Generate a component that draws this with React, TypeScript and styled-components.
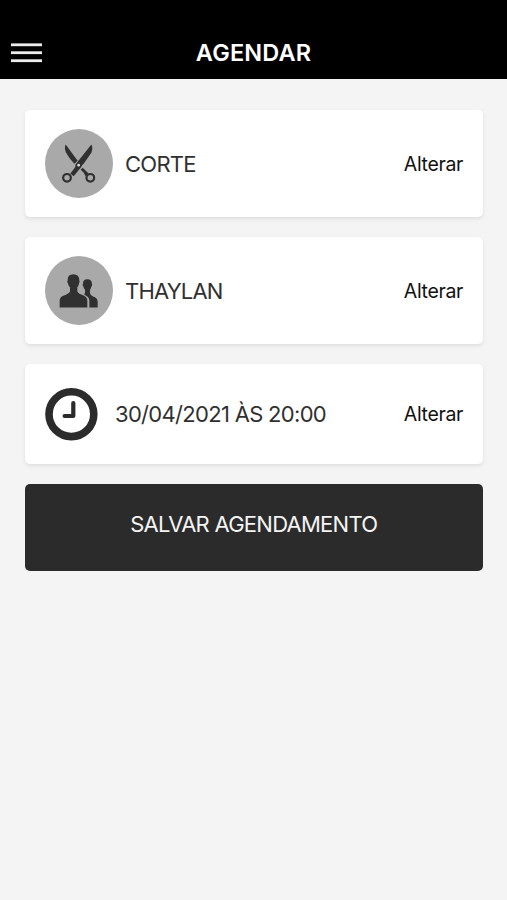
import React from 'react';
import styled, { createGlobalStyle } from 'styled-components';

const GlobalStyle = createGlobalStyle`
  * { box-sizing: border-box; }
  body {
    margin: 0;
    background: #f4f4f4;
    font-family: Inter, 'Liberation Sans', sans-serif;
  }
`;

const Screen = styled.div`
  min-height: 900px;
  background: #f4f4f4;
`;

const Header = styled.header`
  display: grid;
  grid-template-columns: 42px 1fr 42px;
  height: 79px;
  padding-top: 26px;
  align-items: center;
  background: #000;
`;

const MenuButton = styled.button`
  display: flex;
  width: 42px;
  padding: 0 0 0 10.5px;
  border: 0;
  background: none;
`;

const Title = styled.h1`
  margin: 0;
  color: #fff;
  font-size: 23.5px;
  font-weight: 600;
  line-height: 28px;
  letter-spacing: 0.15px;
  text-align: center;
`;

const Content = styled.main`
  display: flex;
  flex-direction: column;
  gap: 20px;
  padding: 31px 24.5px 0 25px;
`;

const Card = styled.section<{ $height: number; $gap: number }>`
  display: flex;
  align-items: center;
  gap: ${(p) => p.$gap}px;
  height: ${(p) => p.$height}px;
  padding: 0 19.5px;
  border-radius: 5px;
  background: #fff;
  box-shadow: 0 2px 4px rgba(0, 0, 0, 0.09);
`;

const Avatar = styled.div`
  flex: none;
  width: 68px;
  height: 69px;
  margin-bottom: 1px;
  border-radius: 50%;
  background: #a9a9a9;
`;

const Icon = styled.svg`
  display: block;
  flex: none;
`;

const Label = styled.span<{ $spacing: number }>`
  flex: 1;
  color: #303030;
  font-size: 22px;
  letter-spacing: ${(p) => p.$spacing}px;
  white-space: nowrap;
`;

const ChangeLink = styled.button`
  padding: 0;
  border: 0;
  background: none;
  color: #111;
  font: inherit;
  font-size: 19.5px;
  letter-spacing: -0.35px;
`;

const SaveButton = styled.button`
  height: 86.5px;
  padding: 0 0 6px;
  border: 0;
  border-radius: 5px;
  background: #2b2b2b;
  color: #f4f4f4;
  font: inherit;
  font-size: 22px;
  letter-spacing: -0.74px;
`;

const MenuIcon = () => (
  <Icon width="31.5" height="20" viewBox="0 0 31.5 20" fill="#ececec">
    <rect y="0.4" width="31.5" height="2.8" />
    <rect y="8.3" width="31.5" height="2.8" />
    <rect y="16.3" width="31.5" height="2.8" />
  </Icon>
);

const Scissors = () => (
  <Icon width="68" height="69" viewBox="27 27 204 204" fill="#303030">
    <path d="M89 72 Q84 82 90 96 Q98 112 115 130 L125 121 Z" />
    <path d="M166 72 Q172 82 166 97 L144 128 Q137 134 134 142 L127 150 L113 167 L103 159 L113 146 Q119 141 119 131 Z" />
    <path d="M140 142 L157 158 L149 167 L142 155 L134 148 Z" />
    <circle cx="93" cy="172" r="11.5" fill="#a9a9a9" stroke="#303030" strokeWidth="6.6" />
    <circle cx="163" cy="172" r="11.5" fill="#a9a9a9" stroke="#303030" strokeWidth="6.6" />
    <circle cx="128" cy="134" r="4" fill="#ddd" />
  </Icon>
);

const People = () => (
  <Icon width="68" height="69" viewBox="27 27 204 204" fill="#303030">
    <path d="M112 80 Q130 80 130 99 Q132 103 129 108 Q128 115 124 119 V132 Q127 139 143 144 Q154 149 154 160 V180 H71 V160 Q71 149 82 145 Q100 138 102 132 V119 Q97 115 96 108 Q92 103 95 98 Q94 80 112 80Z" />
    <path d="M154 95 Q168 95 168 110 Q170 114 166 118 Q165 124 162 127 V137 Q164 144 177 149 Q185 153 185 162 V180 H160 V160 Q160 149 149 144 L144 140 Q147 139 147 134 V127 Q143 123 142 117 Q138 113 141 109 Q140 95 154 95Z" />
  </Icon>
);

const Clock = () => (
  <Icon width="53" height="53" viewBox="0 0 53 53" fill="none" stroke="#2b2b2b">
    <circle cx="26.4" cy="26.2" r="22.4" strokeWidth="7.6" />
    <path d="M28.3 15 V28 H19.6" strokeWidth="4.2" strokeLinecap="round" strokeLinejoin="round" />
  </Icon>
);

export default function App() {
  return (
    <Screen>
      <GlobalStyle />
      <Header>
        <MenuButton aria-label="Menu">
          <MenuIcon />
        </MenuButton>
        <Title>AGENDAR</Title>
      </Header>
      <Content>
        <Card $height={107} $gap={12.5}>
          <Avatar><Scissors /></Avatar>
          <Label $spacing={-0.75}>CORTE</Label>
          <ChangeLink>Alterar</ChangeLink>
        </Card>
        <Card $height={107} $gap={12.5}>
          <Avatar><People /></Avatar>
          <Label $spacing={-0.8}>THAYLAN</Label>
          <ChangeLink>Alterar</ChangeLink>
        </Card>
        <Card $height={100} $gap={17.5}>
          <Clock />
          <Label $spacing={-0.69}>30/04/2021 ÀS 20:00</Label>
          <ChangeLink>Alterar</ChangeLink>
        </Card>
        <SaveButton>SALVAR AGENDAMENTO</SaveButton>
      </Content>
    </Screen>
  );
}
